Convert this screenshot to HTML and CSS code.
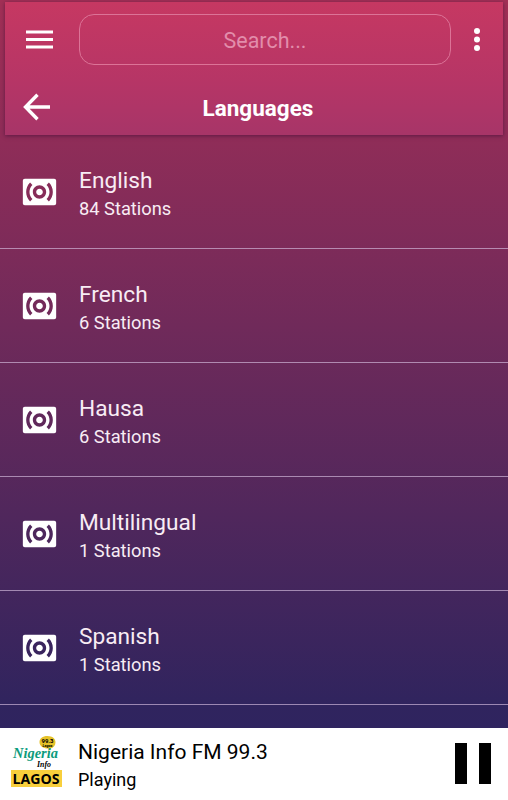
FILE: index.html
```
<!DOCTYPE html>
<html lang="en">
<head>
    <meta charset="UTF-8">
    <meta name="viewport" content="width=device-width, initial-scale=1.0">
    <title>Languages</title>
    <link rel="stylesheet" href="styles.css">
</head>
<body>
    <!-- shared icon for the station rows -->
    <svg width="0" height="0" class="defs">
        <symbol id="surround" viewBox="0 0 24 24">
            <path d="M20.8 4H3.2C2.5 4 2 4.500 2 5.200v13.600c0 .7.5 1.200 1.200 1.200h17.600c.7 0 1.200-.5 1.200-1.200V5.200c0-.7-.5-1.200-1.200-1.200zM7.760 16.240l-1.410 1.410C4.780 16.100 4 14.050 4 12c0-2.050.78-4.100 2.340-5.660l1.410 1.410C6.590 8.930 6 10.460 6 12s.59 3.070 1.760 4.240zM12 16c-2.210 0-4-1.790-4-4s1.790-4 4-4 4 1.790 4 4-1.790 4-4 4zm5.660 1.660l-1.410-1.410C17.410 15.070 18 13.540 18 12s-.59-3.070-1.760-4.240l1.410-1.410C19.220 7.900 20 9.950 20 12c0 2.050-.78 4.100-2.340 5.660zM12 10c-1.100 0-2 .9-2 2s.9 2 2 2 2-.9 2-2-.9-2-2-2z"/>
        </symbol>
    </svg>

    <header>
        <div class="searchBar">
            <button class="menuBtn" aria-label="Menu">
                <svg width="27" height="20" viewBox="0 0 27 20">
                    <path d="M0 2h27M0 9.500h27M0 17h27" stroke="#fff" stroke-width="3"/>
                </svg>
            </button>
            <div class="search">Search...</div>
            <button class="moreBtn" aria-label="More">
                <svg width="6" height="24" viewBox="0 0 6 24" fill="#fff">
                    <circle cx="3" cy="3" r="3"/>
                    <circle cx="3" cy="11.500" r="3"/>
                    <circle cx="3" cy="20" r="3"/>
                </svg>
            </button>
        </div>
        <div class="titleBar">
            <button class="backBtn" aria-label="Back">
                <svg width="28" height="28" viewBox="0 0 28 28" fill="none" stroke="#fff" stroke-width="3.400">
                    <path d="M27 14H3M14.500 1.800L2.500 14l12 12.200"/>
                </svg>
            </button>
            <h1>Languages</h1>
        </div>
    </header>

    <ul class="languages">
        <li>
            <svg class="icon"><use href="#surround"/></svg>
            <div>
                <div class="name">English</div>
                <div class="count">84 Stations</div>
            </div>
        </li>
        <li>
            <svg class="icon"><use href="#surround"/></svg>
            <div>
                <div class="name">French</div>
                <div class="count">6 Stations</div>
            </div>
        </li>
        <li>
            <svg class="icon"><use href="#surround"/></svg>
            <div>
                <div class="name">Hausa</div>
                <div class="count">6 Stations</div>
            </div>
        </li>
        <li>
            <svg class="icon"><use href="#surround"/></svg>
            <div>
                <div class="name">Multilingual</div>
                <div class="count">1 Stations</div>
            </div>
        </li>
        <li>
            <svg class="icon"><use href="#surround"/></svg>
            <div>
                <div class="name">Spanish</div>
                <div class="count">1 Stations</div>
            </div>
        </li>
    </ul>

    <footer>
        <svg class="logo" width="54" height="56" viewBox="0 0 54 56">
            <path d="M37.500 0c5 0 8 2.800 8 6.200s-2 5.500-5 6.200L38.500 15.500l-.5-3c-5 0-8.500-2.600-8.500-6.300s3-6.200 8-6.200z" fill="#e6c229"/>
            <text x="31.500" y="6.500" class="logoFreq" textLength="12" lengthAdjust="spacingAndGlyphs">99.3</text>
            <text x="32.500" y="10.800" class="logoSmall" textLength="10" lengthAdjust="spacingAndGlyphs">Lagos</text>
            <text x="3" y="22" class="logoName" textLength="45" lengthAdjust="spacingAndGlyphs">Nigeria</text>
            <text x="27" y="30.500" class="logoInfo" textLength="14" lengthAdjust="spacingAndGlyphs">Info</text>
            <rect x="1" y="34" width="51" height="17" fill="#f8cf3c"/>
            <text x="2.500" y="48" class="logoCity" textLength="47" lengthAdjust="spacingAndGlyphs">LAGOS</text>
        </svg>
        <div class="playing">
            <div class="station">Nigeria Info FM 99.3</div>
            <div class="status">Playing</div>
        </div>
        <button class="pauseBtn" aria-label="Pause">
            <svg width="36" height="41" viewBox="0 0 36 41">
                <path d="M0 0h12v41H0zM24 0h12v41H24z"/>
            </svg>
        </button>
    </footer>
</body>
</html>
```
FILE: styles.css
```
* {
    box-sizing: border-box;
    font-family: Roboto, sans-serif;
}

body {
    display: flex;
    flex-direction: column;
    height: 800px;
    margin: 0;
    padding-top: 2px;
    overflow: hidden;
    background: linear-gradient(#a23056 0, #902d58 135px, #30245e 705px, #2f245f 728px);
}

button {
    display: flex;
    padding: 0;
    border: none;
    background: none;
}

.defs {
    position: absolute;
}

header {
    height: 133px;
    margin: 0 5px;
    flex-shrink: 0;
    background: linear-gradient(#c63862, #b63566 60%, #a73568);
    box-shadow: 0 1px 4px rgba(50, 10, 50, 0.55);
}

.searchBar {
    display: flex;
    align-items: center;
    height: 75px;
    padding: 0 23px 0 21px;
}

.search {
    width: 372px;
    height: 51px;
    margin-left: 26px;
    border: 1px solid #dc7397;
    border-radius: 15px;
    text-align: center;
    line-height: 52px;
    font-size: 21.5px;
    color: #e28dab;
}

.moreBtn {
    margin-left: auto;
}

.titleBar {
    display: grid;
    grid-template-columns: 30px 1fr 30px;
    align-items: center;
    height: 58px;
    padding: 0 10px 0 18px;
}

.backBtn {
    margin-top: 2px;
}

h1 {
    margin: 3px 0 0;
    text-align: center;
    font-size: 22.5px;
    font-weight: bold;
    line-height: 28px;
    color: #fff;
}

.languages {
    flex: 1;
    margin: 0;
    padding: 0;
    list-style: none;
    color: #f8ecf4;
}

.languages li {
    display: flex;
    align-items: center;
    height: 114px;
    padding-left: 19px;
    border-bottom: 1px solid rgba(215, 190, 225, 0.65);
}

.icon {
    width: 41px;
    height: 40px;
    margin-right: 19px;
    fill: #fff;
}

.name {
    font-size: 22.7px;
    line-height: 28px;
    margin-top: 5px;
}

.count {
    font-size: 18.3px;
    line-height: 27px;
}

footer {
    display: flex;
    align-items: center;
    height: 72px;
    flex-shrink: 0;
    padding: 0 17px 0 10px;
    background: #fff;
    color: #000;
}

.playing {
    flex: 1;
    margin: 3px 0 0 14px;
}

.station {
    font-size: 21px;
    line-height: 28px;
}

.status {
    font-size: 18px;
    line-height: 28px;
}

.pauseBtn {
    margin-bottom: 2px;
}

.logoFreq {
    font-size: 5px;
    font-weight: bold;
}

.logoSmall {
    font-size: 3.5px;
    font-weight: bold;
    font-style: italic;
}

.logoName {
    font-family: "Liberation Serif", serif;
    font-size: 15px;
    font-style: italic;
    font-weight: bold;
    fill: #0c9b7c;
}

.logoInfo {
    font-family: "Liberation Serif", serif;
    font-size: 9px;
    font-style: italic;
    font-weight: bold;
}

.logoCity {
    font-family: "Open Sans", sans-serif;
    font-size: 15px;
    font-weight: bold;
}
```
